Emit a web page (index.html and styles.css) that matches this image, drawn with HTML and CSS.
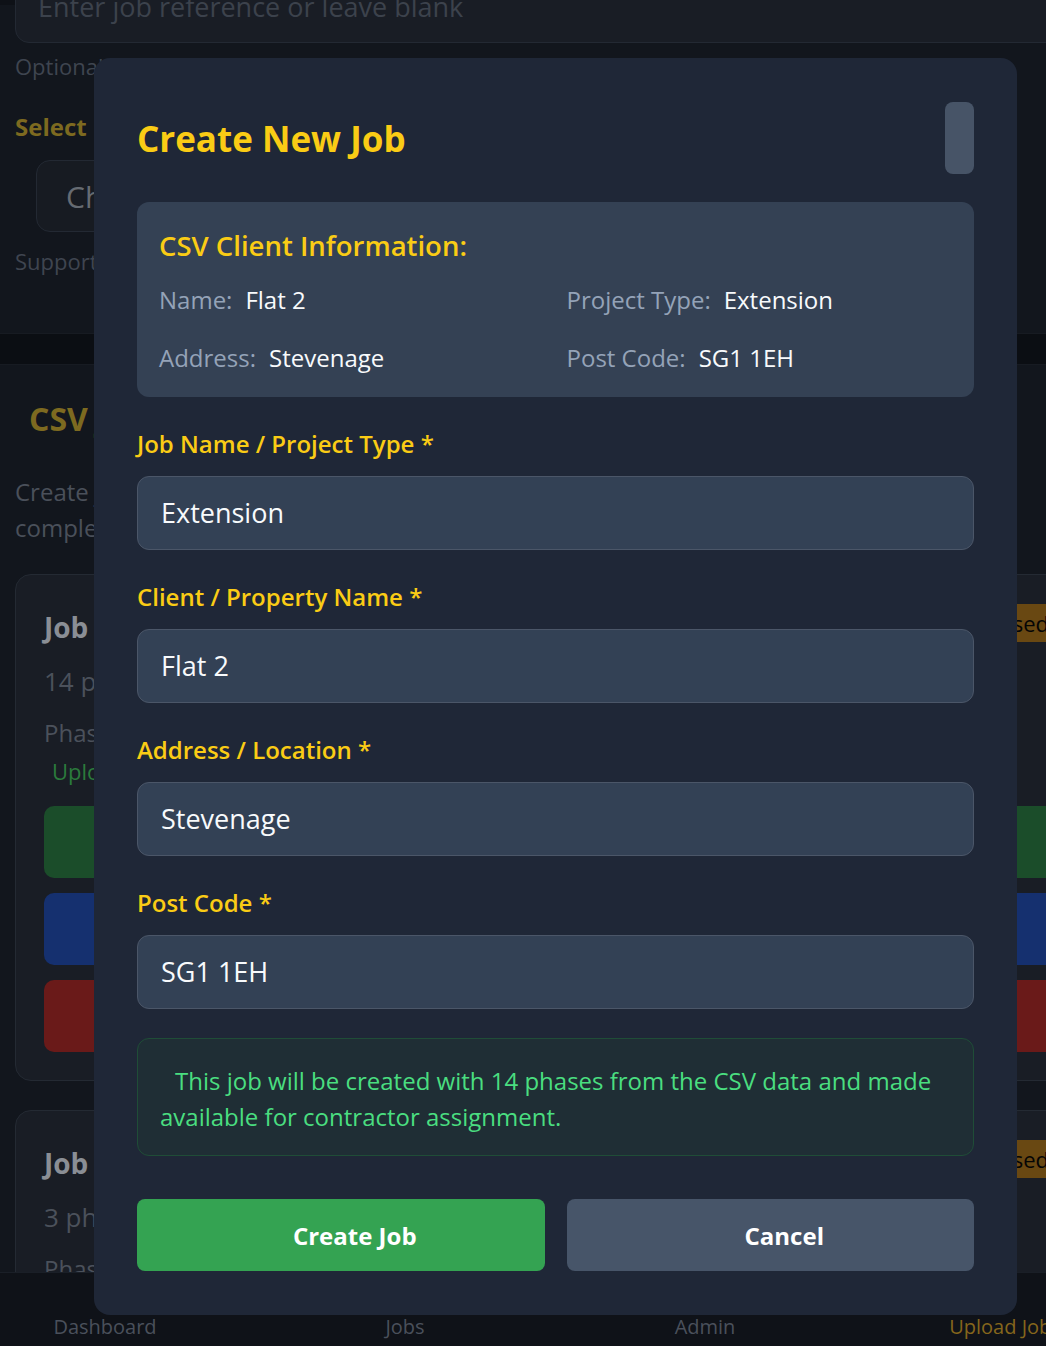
FILE: index.html
```html
<!DOCTYPE html>
<html lang="en">
<head>
<meta charset="utf-8">
<title>Create New Job</title>
<link rel="stylesheet" href="styles.css">
</head>
<body>
<div class="page">
  <section class="upload-panel">
    <div class="ref-input">Enter job reference or leave blank</div>
    <p class="hint">Optional: provide a reference to link this upload to an existing job</p>
    <h3 class="panel-label">Select File</h3>
    <div class="file-box">Choose CSV file</div>
    <p class="hint support">Supported formats: CSV</p>
  </section>
  <div class="band"></div>
  <section class="jobs-panel">
    <h2 class="jobs-title">CSV Jobs</h2>
    <p class="jobs-desc">Create jobs from uploaded CSV data. Each job contains the<br>complete set of phases for the property.</p>
    <div class="job-card">
      <div class="job-head">
        <h3 class="job-name">Job Extension</h3>
        <span class="badge">Processed</span>
      </div>
      <p class="job-meta">14 phases</p>
      <p class="job-sub">Phases imported from CSV</p>
      <p class="job-ok">Uploaded successfully</p>
      <div class="job-btn green"></div>
      <div class="job-btn blue"></div>
      <div class="job-btn red"></div>
    </div>
    <div class="job-card">
      <div class="job-head">
        <h3 class="job-name">Job Loft</h3>
        <span class="badge">Processed</span>
      </div>
      <p class="job-meta">3 phases</p>
      <p class="job-sub">Phases imported from CSV</p>
    </div>
  </section>
</div>

<nav class="bottom-nav">
  <span class="nav-item">Dashboard</span>
  <span class="nav-item">Jobs</span>
  <span class="nav-item">Admin</span>
  <span class="nav-item active">Upload Jobs</span>
</nav>

<div class="overlay">
  <div class="modal">
    <div class="modal-head">
      <h2 class="modal-title">Create New Job</h2>
      <div class="close-btn"></div>
    </div>

    <div class="info-box">
      <h3 class="info-title">CSV Client Information:</h3>
      <div class="info-grid">
        <div class="info-row"><span class="info-label">Name:</span><span class="info-value">Flat 2</span></div>
        <div class="info-row"><span class="info-label">Project Type:</span><span class="info-value">Extension</span></div>
        <div class="info-row"><span class="info-label">Address:</span><span class="info-value">Stevenage</span></div>
        <div class="info-row"><span class="info-label">Post Code:</span><span class="info-value">SG1 1EH</span></div>
      </div>
    </div>

    <div class="fields">
      <div class="field">
        <label class="field-label">Job Name / Project Type *</label>
        <div class="field-input">Extension</div>
      </div>
      <div class="field">
        <label class="field-label">Client / Property Name *</label>
        <div class="field-input">Flat 2</div>
      </div>
      <div class="field">
        <label class="field-label">Address / Location *</label>
        <div class="field-input">Stevenage</div>
      </div>
      <div class="field">
        <label class="field-label">Post Code *</label>
        <div class="field-input">SG1 1EH</div>
      </div>
    </div>

    <div class="notice"><span class="notice-indent"></span>This job will be created with 14 phases from the CSV data and made available for contractor assignment.</div>

    <div class="actions">
      <button class="btn btn-create">Create Job</button>
      <button class="btn btn-cancel">Cancel</button>
    </div>
  </div>
</div>
</body>
</html>
```

FILE: styles.css
```css
* { box-sizing: border-box; }

html, body {
  margin: 0;
  padding: 0;
  height: 100%;
  overflow: hidden;
}

body {
  background: #11151c;
  font-family: "Open Sans", "Noto Sans", "Liberation Sans", sans-serif;
  color: #e5e7eb;
}

p, h2, h3 { margin: 0; }

.page {
  width: 1090px;
}

/* ---------- background (dimmed) page ---------- */
.upload-panel {
  height: 333px;
  padding: 0 0 0 15px;
  background: #12161d;
  border-top: 5px solid #0e1117;
}

.ref-input {
  margin-top: -40px;
  height: 78px;
  border: 1px solid #232933;
  border-radius: 14px;
  background: #191d25;
  padding: 24px 22px 0;
  font-size: 27px;
  line-height: 34px;
  color: #3c424c;
  white-space: nowrap;
}

.hint {
  margin-top: 8px;
  font-size: 22px;
  line-height: 30px;
  color: #3f4550;
  white-space: nowrap;
}

.panel-label {
  margin-top: 31px;
  font-size: 24px;
  font-weight: 700;
  line-height: 30px;
  color: #7d6a20;
}

.file-box {
  margin: 18px 0 0 21px;
  width: 300px;
  height: 72px;
  border: 1px solid #232933;
  border-radius: 14px;
  background: #171b22;
  padding: 0 29px;
  font-size: 30px;
  line-height: 72px;
  color: #666b72;
}

.support { margin-top: 14px; }

.band {
  height: 32px;
  background: #0b0e13;
  border-top: 1px solid #171b22;
  border-bottom: 1px solid #171b22;
}

.jobs-panel {
  background: #12161d;
  padding: 34px 0 30px 15px;
}

.jobs-title {
  padding-left: 14px;
  font-size: 32px;
  line-height: 40px;
  font-weight: 700;
  color: #7d6a20;
}

.jobs-desc {
  margin-top: 35px;
  font-size: 24px;
  line-height: 36px;
  color: #4a505a;
  white-space: nowrap;
}

.job-card {
  margin-top: 28px;
  background: #191d25;
  border: 1px solid #242a33;
  border-radius: 16px;
  padding: 30px 28px 28px;
}

.job-card + .job-card { margin-top: 29px; }

.job-head {
  display: flex;
  justify-content: space-between;
  align-items: flex-start;
}

.job-name {
  font-size: 28px;
  font-weight: 700;
  line-height: 44px;
  color: #8a8e95;
}

.badge {
  margin-top: -1px;
  background: #694812;
  color: #050505;
  font-size: 22px;
  line-height: 38px;
  padding: 0 12px;
}

.job-meta {
  margin-top: 14px;
  font-size: 26px;
  line-height: 36px;
  color: #4b515b;
}

.job-sub {
  margin-top: 18px;
  font-size: 24px;
  line-height: 32px;
  color: #4b515b;
}

.job-ok {
  margin-top: 7px;
  padding-left: 8px;
  font-size: 22px;
  line-height: 30px;
  color: #2b7a3c;
}

.job-btn {
  height: 72px;
  border-radius: 10px;
  margin-top: 15px;
}
.job-ok + .job-btn { margin-top: 20px; }
.job-btn.green { background: #1b4d2a; }
.job-btn.blue { background: #15306f; }
.job-btn.red { background: #6a1a19; }

.bottom-nav {
  position: fixed;
  left: -45px;
  bottom: 0;
  width: 1200px;
  height: 74px;
  background: #0f1218;
  border-top: 1px solid #1a1f27;
  display: flex;
  align-items: flex-end;
  padding-bottom: 4px;
}

.nav-item {
  flex: 1;
  text-align: center;
  font-size: 20px;
  line-height: 30px;
  color: #4a505b;
}
.nav-item.active { color: #85661c; }

/* ---------- modal ---------- */
.overlay {
  position: fixed;
  inset: 0;
  padding: 58px 0 0 94px;
}

.modal {
  width: 923px;
  height: 1257px;
  background: #1f2737;
  border-radius: 16px;
  padding: 44px 43px 44px 43px;
  display: flex;
  flex-direction: column;
}

.modal-head {
  display: flex;
  justify-content: space-between;
  align-items: center;
  height: 72px;
}

.modal-title {
  font-size: 35px;
  font-weight: 700;
  color: #facc15;
  line-height: 44px;
  margin-top: 1px;
}

.close-btn {
  width: 29px;
  height: 72px;
  border-radius: 8px;
  background: #475467;
}

.info-box {
  margin-top: 28px;
  background: #344154;
  border-radius: 12px;
  padding: 22px 22px 22px 22px;
}

.info-title {
  margin-top: 4px;
  font-size: 27.5px;
  line-height: 36px;
  font-weight: 600;
  color: #facc15;
}

.info-grid {
  margin-top: 19px;
  display: grid;
  grid-template-columns: 1fr 1fr;
  column-gap: 22px;
  row-gap: 24px;
}

.info-row {
  font-size: 24px;
  line-height: 34px;
  white-space: nowrap;
}

.info-label {
  color: #94a3b8;
  margin-right: 13px;
}

.info-value { color: #f8fafc; }

.fields {
  margin-top: 31px;
  display: flex;
  flex-direction: column;
  gap: 31px;
}

.field {
  display: flex;
  flex-direction: column;
}

.field-label {
  font-size: 24px;
  line-height: 32px;
  font-weight: 600;
  color: #facc15;
  margin-bottom: 16px;
}

.field-input {
  height: 74px;
  background: #334155;
  border: 1px solid #4b5668;
  border-radius: 12px;
  padding: 0 23px;
  font-size: 27px;
  line-height: 72px;
  color: #f8fafc;
}

.notice {
  margin-top: 29px;
  background: #1f2e35;
  border: 1px solid #1f4d37;
  border-radius: 12px;
  padding: 24px 22px 20px 22px;
  font-size: 24px;
  line-height: 36px;
  color: #4ade80;
}

.notice-indent {
  display: inline-block;
  width: 15px;
}

.actions {
  margin-top: 43px;
  display: flex;
  gap: 22px;
}

.btn {
  flex: 1;
  height: 72px;
  border: none;
  border-radius: 8px;
  padding: 0 0 0 28px;
  font-family: inherit;
  font-size: 24px;
  font-weight: 700;
  color: #ffffff;
  cursor: pointer;
}

.btn-create { background: #34a352; }
.btn-cancel { background: #475569; }
```
